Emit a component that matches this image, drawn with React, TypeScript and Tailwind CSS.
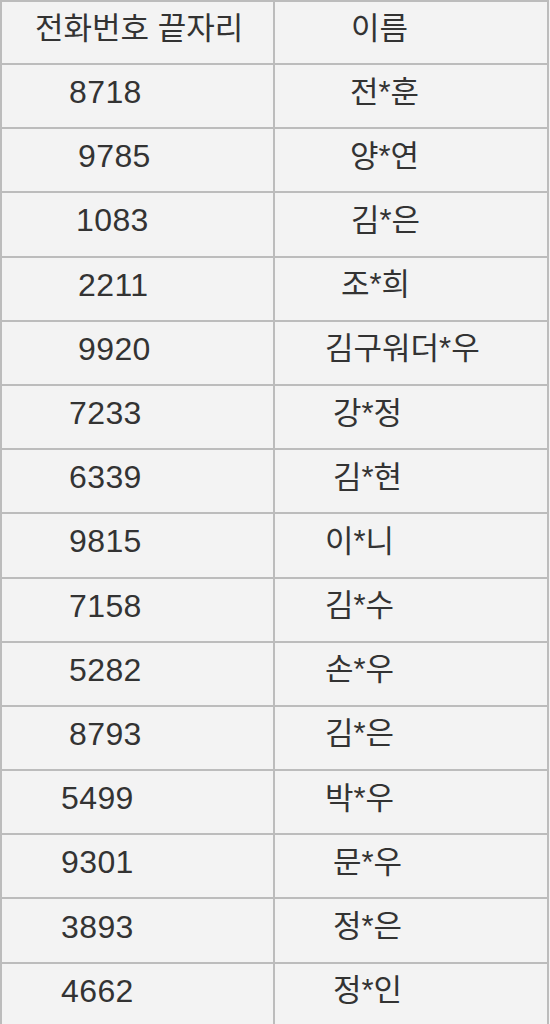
import React from "react";

type Row = { num: string; numPad: string; name: string; namePad: string };

const rows: Row[] = [
  { num: "8718", numPad: "pl-[67px]", name: "전*훈", namePad: "pl-[75px]" },
  { num: "9785", numPad: "pl-[76px]", name: "양*연", namePad: "pl-[75px]" },
  { num: "1083", numPad: "pl-[74px]", name: "김*은", namePad: "pl-[76px]" },
  { num: "2211", numPad: "pl-[76px]", name: "조*희", namePad: "pl-[66px]" },
  { num: "9920", numPad: "pl-[76px]", name: "김구워더*우", namePad: "pl-[50px]" },
  { num: "7233", numPad: "pl-[67px]", name: "강*정", namePad: "pl-[58px]" },
  { num: "6339", numPad: "pl-[67px]", name: "김*현", namePad: "pl-[58px]" },
  { num: "9815", numPad: "pl-[67px]", name: "이*니", namePad: "pl-[50px]" },
  { num: "7158", numPad: "pl-[67px]", name: "김*수", namePad: "pl-[50px]" },
  { num: "5282", numPad: "pl-[67px]", name: "손*우", namePad: "pl-[50px]" },
  { num: "8793", numPad: "pl-[67px]", name: "김*은", namePad: "pl-[50px]" },
  { num: "5499", numPad: "pl-[59px]", name: "박*우", namePad: "pl-[50px]" },
  { num: "9301", numPad: "pl-[59px]", name: "문*우", namePad: "pl-[58px]" },
  { num: "3893", numPad: "pl-[59px]", name: "정*은", namePad: "pl-[58px]" },
  { num: "4662", numPad: "pl-[59px]", name: "정*인", namePad: "pl-[58px]" },
];

const font = "font-['Liberation_Sans','Noto_Sans_CJK_KR',sans-serif]";

export default function App() {
  return (
    <div className={`w-[550px] h-[1024px] overflow-hidden bg-[#f3f3f3] text-[#333333] ${font}`}>
      <div className="w-[549px] border-l-2 border-r-2 border-t-2 border-[#bcbcbc]">
        <div className="flex h-[63px] border-b-2 border-[#bcbcbc]">
          <div className="w-[273px] shrink-0 border-r-2 border-[#bcbcbc] flex items-center pl-[33px] pb-[8px]">
            <span className="text-[31px] leading-none">전화번호 끝자리</span>
          </div>
          <div className="flex-1 flex items-center pl-[76px] pb-[8px]">
            <span className="text-[31px] leading-none">이름</span>
          </div>
        </div>
        {rows.map((r, i) => (
          <div key={i} className="flex h-[64.2px] border-b-2 border-[#bcbcbc]">
            <div className={`w-[273px] shrink-0 border-r-2 border-[#bcbcbc] flex items-center pb-[8px] ${r.numPad}`}>
              <span className="text-[32px] leading-none tracking-[0.4px]">{r.num}</span>
            </div>
            <div className={`flex-1 flex items-center pb-[8px] ${r.namePad}`}>
              <span className="text-[31px] leading-none">{r.name}</span>
            </div>
          </div>
        ))}
      </div>
    </div>
  );
}
